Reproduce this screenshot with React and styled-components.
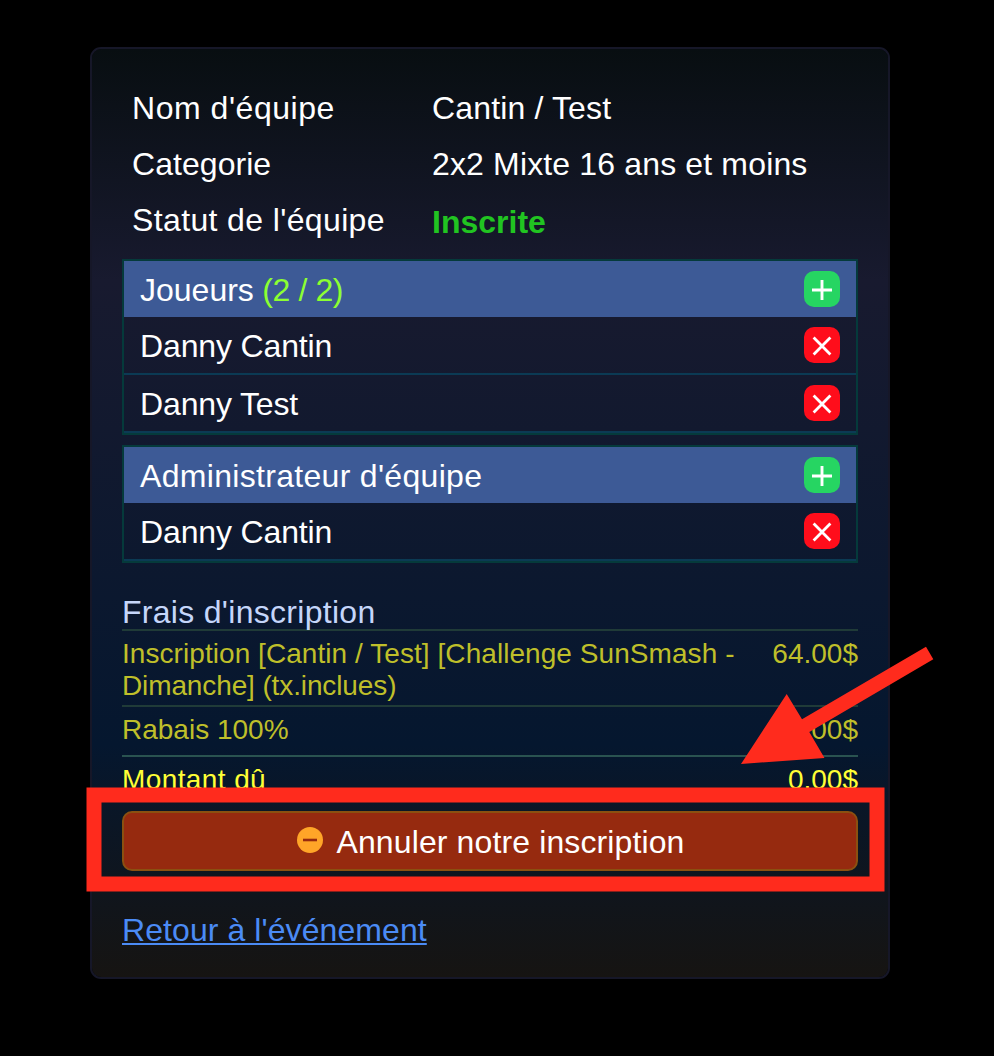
import React from 'react';
import styled, { createGlobalStyle } from 'styled-components';

const GlobalStyle = createGlobalStyle`
  body {
    margin: 0;
    background: #000;
    color: #FFF;
    font-family: "Liberation Sans", Arial, sans-serif;
    font-size: 32px;
  }
`;

const Page = styled.main`
  position: relative;
  box-sizing: border-box;
  width: 994px;
  height: 1056px;
  padding: 47px 104px 0 90px;
  overflow: hidden;
`;

const Card = styled.section`
  box-sizing: border-box;
  height: 932px;
  padding: 30px;
  border: 2px solid #161728;
  border-radius: 11px;
  background: linear-gradient(#080e11, #181a2f 25%, #05172f 75%, #161412);
  background-clip: padding-box;
`;

const Text = styled.span`
  letter-spacing: ${({ $spacing }) => $spacing || 0}px;
  white-space: nowrap;
`;

const InfoList = styled.dl`
  margin: 0 0 12px;
`;

const InfoRow = styled.div`
  display: grid;
  grid-template-columns: 300px 1fr;
  height: 56px;
  padding-left: 10px;
  line-height: 58px;
`;

const InfoLabel = styled.dt`
  margin: 0;
`;

const InfoValue = styled.dd`
  margin: 0;
`;

const Status = styled.strong`
  display: block;
  padding-top: 2px;
  color: #21C421;
`;

const Panel = styled.section`
  margin-bottom: 10px;
  border: 2px solid #053A3B;
`;

const PanelRow = styled.div`
  display: flex;
  align-items: center;
  justify-content: space-between;
  height: 56px;
  padding: 0 16px;
  border-bottom: 2px solid #0B3A54;

  > span {
    padding-top: 2px;
  }
`;

const PanelHeader = styled(PanelRow)`
  background: #3D5A96;
  border-bottom: 0;
`;

const Count = styled.span`
  color: #8CFF32;
  letter-spacing: -0.4px;
`;

const IconButton = styled.button`
  display: flex;
  width: 36px;
  height: 36px;
  padding: 0;
  border: 0;
  border-radius: 10px;
  background: ${({ $add }) => ($add ? '#26D562' : '#FF0D1B')};
`;

const FeesTitle = styled.h2`
  height: 35px;
  margin: 31px 0 0;
  color: #C5D6FA;
  font-size: 32px;
  font-weight: 400;
  line-height: 36px;
`;

const FeeRow = styled.div`
  box-sizing: border-box;
  display: flex;
  justify-content: space-between;
  height: ${({ $height }) => $height}px;
  padding-top: 7px;
  border-top: 2px solid ${({ $total }) => ($total ? '#2A5350' : '#203B38')};
  color: ${({ $total }) => ($total ? '#FFFF35' : '#BFBF2A')};
  font-size: 28px;
  line-height: 32px;
`;

const CancelButton = styled.button`
  display: flex;
  align-items: center;
  justify-content: center;
  gap: 13px;
  width: 100%;
  height: 60px;
  padding: 0 0 0 2px;
  border: 2px solid #8B5010;
  border-radius: 10px;
  background: #962A0F;
  color: #FFF;
  font: inherit;

  svg {
    margin-top: -2px;
  }

  span {
    padding-top: 2px;
  }
`;

const BackLink = styled.a`
  display: inline-block;
  margin-top: 41px;
  color: #4B8BF5;
  line-height: 36px;
  text-decoration: underline;
  text-decoration-thickness: 2px;
  text-underline-offset: 2px;
  text-decoration-skip-ink: none;
`;

const Annotation = styled.svg`
  position: absolute;
  inset: 0;
  pointer-events: none;
`;

const AddIcon = () => (
  <svg width="36" height="36" viewBox="0 0 36 36" stroke="#FFF" strokeWidth="2.9">
    <path d="M18 9v20M8 19h20" />
  </svg>
);

const RemoveIcon = () => (
  <svg width="36" height="36" viewBox="0 0 36 36" stroke="#FFF" strokeWidth="2.8">
    <path d="M9.6 10.6l16.8 16.8M26.4 10.6l-16.8 16.8" />
  </svg>
);

const MinusIcon = () => (
  <svg width="26" height="26" viewBox="0 0 26 26">
    <circle cx="13" cy="13" r="13" fill="#FFA528" />
    <path d="M6 13h14" stroke="#962A0F" strokeWidth="2.6" />
  </svg>
);

const MemberPanel = ({ title, spacing, count, members }) => (
  <Panel>
    <PanelHeader>
      <Text $spacing={spacing}>
        {title}
        {count && <Count> {count}</Count>}
      </Text>
      <IconButton $add aria-label="Ajouter"><AddIcon /></IconButton>
    </PanelHeader>
    {members.map((name) => (
      <PanelRow key={name}>
        <Text $spacing={-0.14}>{name}</Text>
        <IconButton aria-label="Retirer"><RemoveIcon /></IconButton>
      </PanelRow>
    ))}
  </Panel>
);

const App = () => {
  return (
    <Page>
      <GlobalStyle />
      <Card>
        <InfoList>
          <InfoRow>
            <InfoLabel><Text $spacing={0.54}>Nom d'équipe</Text></InfoLabel>
            <InfoValue><Text $spacing={0.15}>Cantin / Test</Text></InfoValue>
          </InfoRow>
          <InfoRow>
            <InfoLabel><Text $spacing={0.05}>Categorie</Text></InfoLabel>
            <InfoValue><Text $spacing={0.15}>2x2 Mixte 16 ans et moins</Text></InfoValue>
          </InfoRow>
          <InfoRow>
            <InfoLabel><Text $spacing={0.37}>Statut de l'équipe</Text></InfoLabel>
            <InfoValue><Status><Text>Inscrite</Text></Status></InfoValue>
          </InfoRow>
        </InfoList>
        <MemberPanel
          title="Joueurs"
          count="(2 / 2)"
          members={['Danny Cantin', 'Danny Test']}
        />
        <MemberPanel
          title="Administrateur d'équipe"
          spacing={0.31}
          members={['Danny Cantin']}
        />
        <FeesTitle><Text $spacing={0.29}>Frais d'inscription</Text></FeesTitle>
        <FeeRow $height={76}>
          <div>
            <Text $spacing={0.06}>Inscription [Cantin / Test] [Challenge SunSmash -</Text>
            <br />
            <Text $spacing={-0.12}>Dimanche] (tx.inclues)</Text>
          </div>
          <Text>64.00$</Text>
        </FeeRow>
        <FeeRow $height={50}>
          <Text>Rabais 100%</Text>
          <Text>-64.00$</Text>
        </FeeRow>
        <FeeRow $height={56} $total>
          <Text $spacing={0.4}>Montant dû</Text>
          <Text>0.00$</Text>
        </FeeRow>
        <CancelButton>
          <MinusIcon />
          <Text $spacing={0.12}>Annuler notre inscription</Text>
        </CancelButton>
        <BackLink href="#"><Text $spacing={0.08}>Retour à l'événement</Text></BackLink>
      </Card>
      <Annotation width="994" height="1056" viewBox="0 0 994 1056">
        <rect x="94" y="795" width="783" height="89" fill="none" stroke="#FF2B1D" strokeWidth="15" />
        <path d="M741 764L786.7 694L802 719.3L926 646.7L933.3 659.3L809.3 732L824.5 758Z" fill="#FF2B1D" />
      </Annotation>
    </Page>
  );
};

export default App;
